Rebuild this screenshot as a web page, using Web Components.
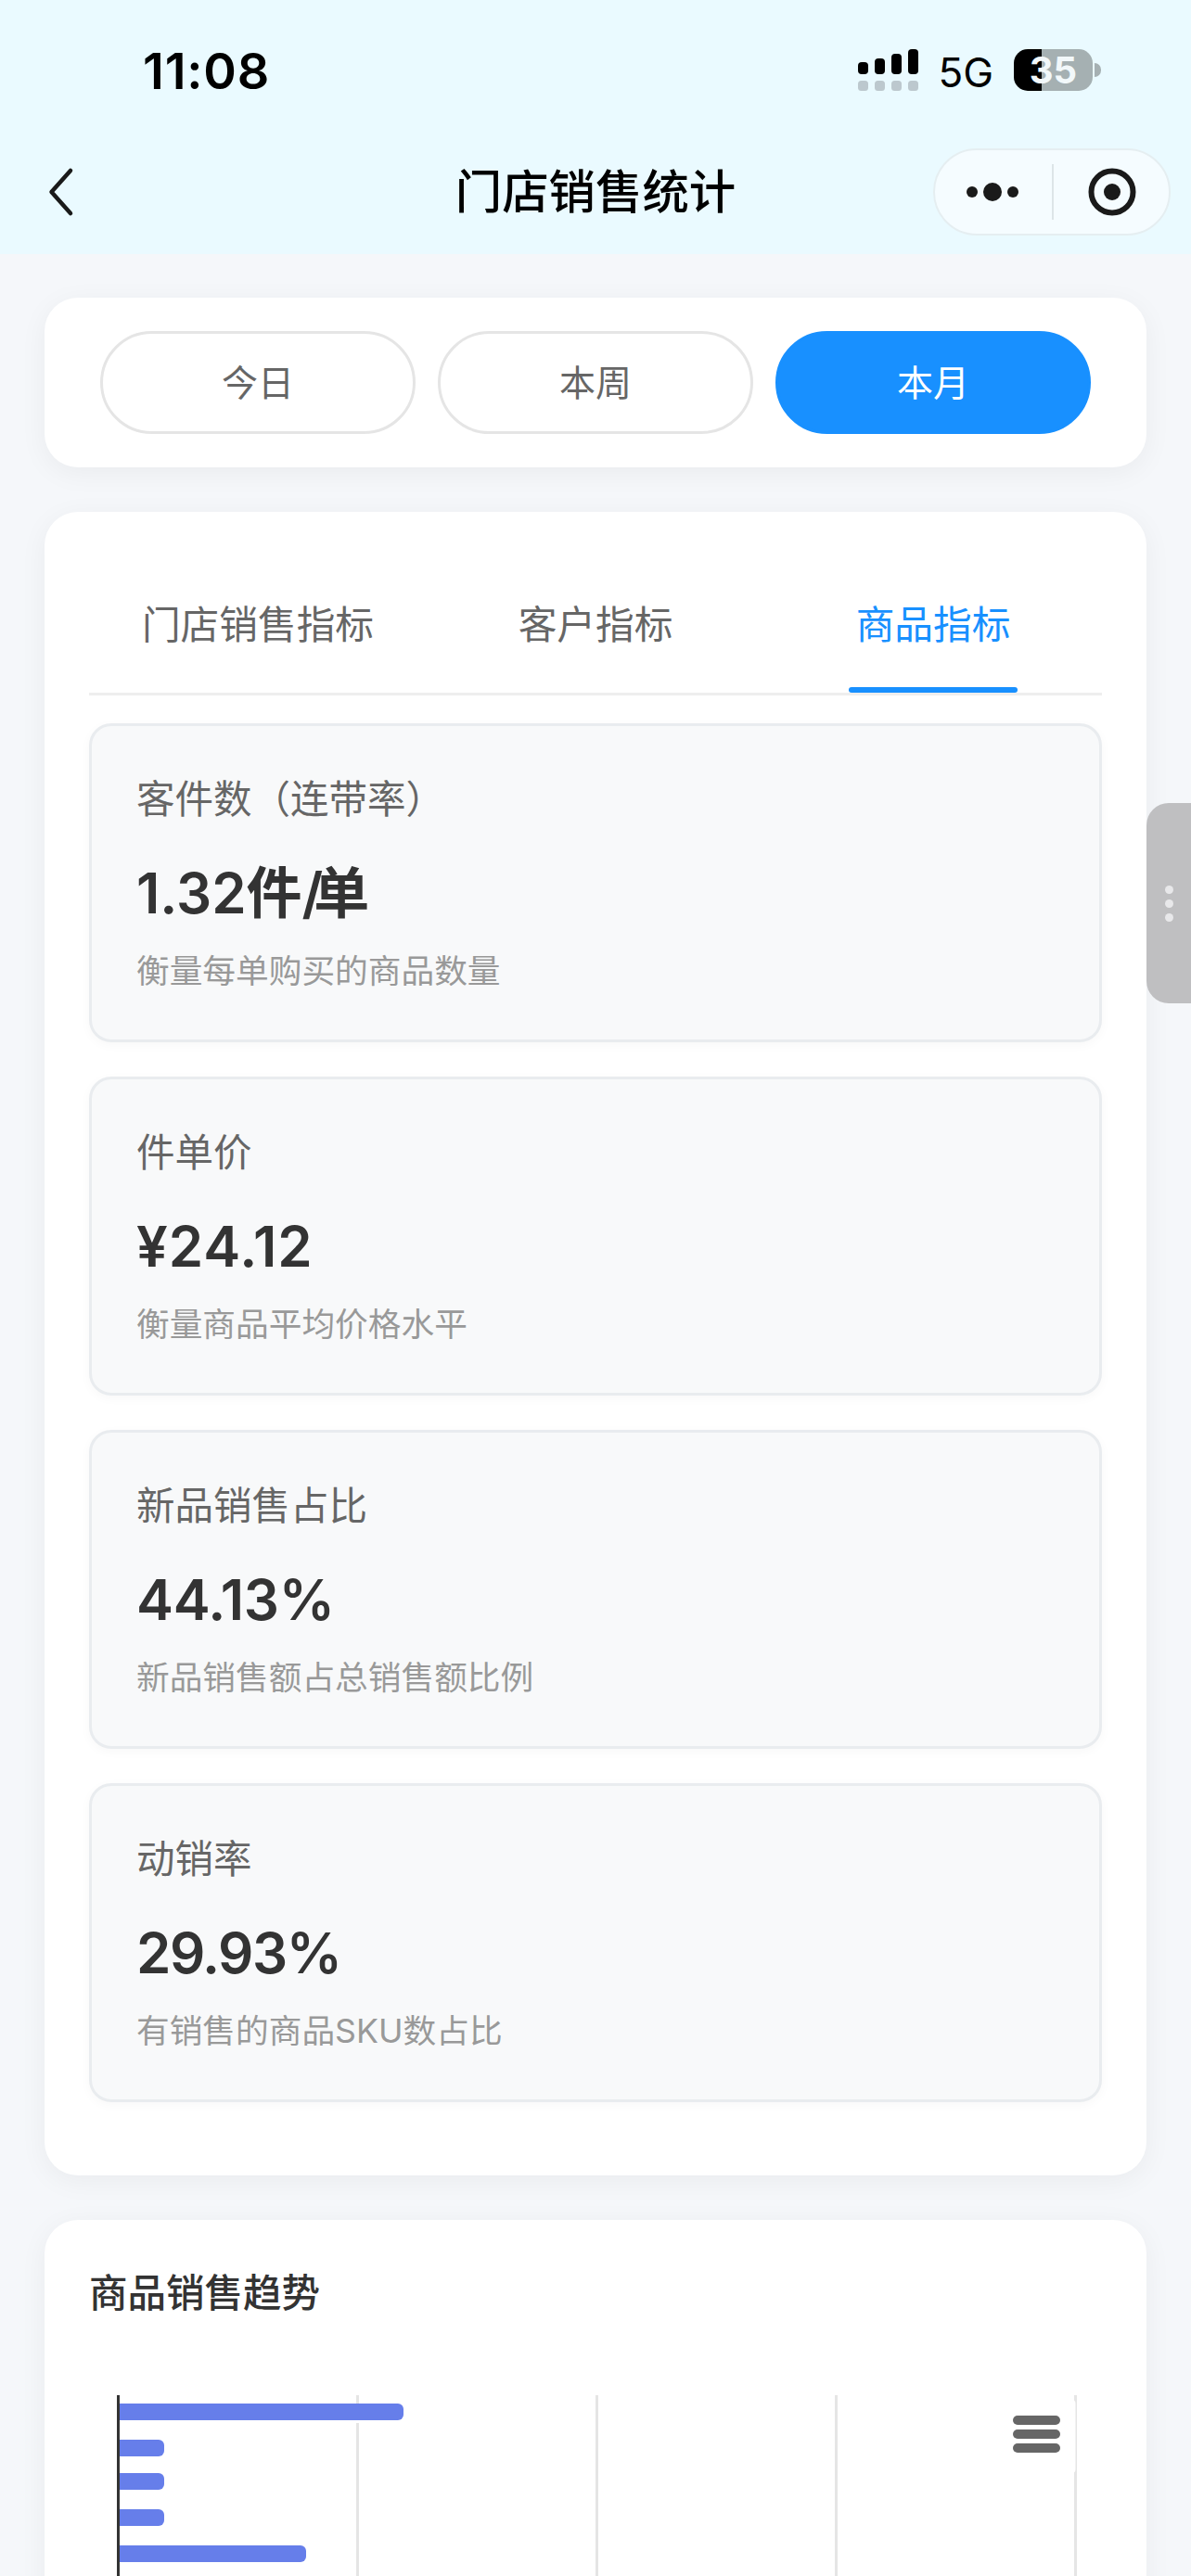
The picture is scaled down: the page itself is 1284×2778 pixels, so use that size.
<!DOCTYPE html>
<html lang="zh-CN">
<head>
<meta charset="utf-8">
<title>门店销售统计</title>
<style>
    html, body {
        margin: 0;
        height: 2778px;
        overflow: hidden;
        background: #f5f7fa;
        font-family: Inter, "Noto Sans CJK SC", sans-serif;
    }
    .page {
        position: relative;
        height: 2778px;
        overflow: hidden;
    }
    .content {
        display: flex;
        flex-direction: column;
        gap: 48px;
        padding: 47px 48px 0;
    }
    .periods {
        display: grid;
        grid-template-columns: repeat(3, 1fr);
        gap: 24px;
    }
    .metrics {
        display: flex;
        flex-direction: column;
        gap: 37px;
        margin-top: 30px;
        padding-bottom: 31px;
    }
</style>
</head>
<body>
<div class="page">
    <status-bar time="11:08" network="5G" battery="35"></status-bar>
    <nav-bar>门店销售统计</nav-bar>
    <div class="content">
        <panel-card compact>
            <div class="periods">
                <period-button>今日</period-button>
                <period-button>本周</period-button>
                <period-button active>本月</period-button>
            </div>
        </panel-card>
        <panel-card>
            <metric-tabs>
                <metric-tab>门店销售指标</metric-tab>
                <metric-tab>客户指标</metric-tab>
                <metric-tab active>商品指标</metric-tab>
            </metric-tabs>
            <div class="metrics">
                <metric-card>
                    <span slot="label">客件数（连带率）</span>
                    <span slot="value">1.32件<span style="letter-spacing: -10px">/</span>单</span>
                    <span slot="desc">衡量每单购买的商品数量</span>
                </metric-card>
                <metric-card>
                    <span slot="label">件单价</span>
                    <span slot="value" style="letter-spacing: 1px">¥24.12</span>
                    <span slot="desc">衡量商品平均价格水平</span>
                </metric-card>
                <metric-card>
                    <span slot="label">新品销售占比</span>
                    <span slot="value" style="letter-spacing: -0.3px">44.13%</span>
                    <span slot="desc">新品销售额占总销售额比例</span>
                </metric-card>
                <metric-card>
                    <span slot="label">动销率</span>
                    <span slot="value" style="letter-spacing: -1.5px">29.93%</span>
                    <span slot="desc">有销售的商品SKU数占比</span>
                </metric-card>
            </div>
        </panel-card>
        <panel-card>
            <trend-chart>商品销售趋势</trend-chart>
        </panel-card>
    </div>
    <side-handle></side-handle>
</div>

<script>
class StatusBar extends HTMLElement {
    constructor() {
        super();
        this.attachShadow({ mode: 'open' }).innerHTML = `
            <style>
                :host {
                    display: flex;
                    justify-content: space-between;
                    box-sizing: border-box;
                    height: 140px;
                    padding: 53px 106px 0 154px;
                    background: #eafaff;
                    color: #000;
                }
                .time {
                    font-size: 54px;
                    font-weight: 600;
                    line-height: 48px;
                    letter-spacing: 0.8px;
                }
                .right {
                    display: flex;
                    align-items: flex-start;
                }
                .net {
                    margin: 0 22px 0 21px;
                    font-size: 44px;
                    line-height: 50px;
                }
                .battery {
                    position: relative;
                    width: 85px;
                    height: 45px;
                    border-radius: 15px;
                    background: linear-gradient(90deg, #000 30px, #a5b0b2 30px);
                    color: #f2f8fa;
                    font-size: 40px;
                    font-weight: 700;
                    line-height: 45px;
                    text-align: center;
                }
                .battery::after {
                    content: '';
                    position: absolute;
                    left: 87px;
                    top: 15px;
                    width: 7px;
                    height: 15px;
                    border-radius: 0 8px 8px 0;
                    background: #a5b0b2;
                }
                svg { display: block; }
            </style>
            <div class="time">${this.getAttribute('time')}</div>
            <div class="right">
                <svg width="66" height="45" viewBox="0 0 66 45">
                    <rect x="1" y="14" width="11" height="13" rx="4" fill="#000"/>
                    <rect x="19" y="10" width="11" height="17" rx="4" fill="#000"/>
                    <rect x="37" y="5" width="11" height="22" rx="4" fill="#000"/>
                    <rect x="55" y="0" width="11" height="27" rx="4" fill="#000"/>
                    <g fill="#bcc8ce">
                        <rect x="1" y="34" width="11" height="11" rx="3.5"/>
                        <rect x="19" y="34" width="11" height="11" rx="3.5"/>
                        <rect x="37" y="34" width="11" height="11" rx="3.5"/>
                        <rect x="55" y="34" width="11" height="11" rx="3.5"/>
                    </g>
                </svg>
                <div class="net">${this.getAttribute('network')}</div>
                <div class="battery">${this.getAttribute('battery')}</div>
            </div>
        `;
    }
}

class NavBar extends HTMLElement {
    constructor() {
        super();
        this.attachShadow({ mode: 'open' }).innerHTML = `
            <style>
                :host {
                    display: grid;
                    grid-template-columns: 1fr auto 1fr;
                    align-items: center;
                    box-sizing: border-box;
                    height: 134px;
                    padding: 0 22px;
                    background: #eafaff;
                    color: #000;
                }
                .back {
                    margin-left: 28px;
                }
                .title {
                    font-size: 50.4px;
                    font-weight: 500;
                    line-height: 68px;
                }
                .capsule {
                    justify-self: end;
                    width: 256px;
                    height: 94px;
                }
                svg { display: block; }
            </style>
            <svg class="back" width="32" height="54" viewBox="0 0 32 54">
                <path d="M26 4 L5.5 27 L26 50" fill="none" stroke="#1a1a1a" stroke-width="4.5" stroke-linecap="round" stroke-linejoin="round"/>
            </svg>
            <div class="title"><slot></slot></div>
            <svg class="capsule" viewBox="0 0 256 94">
                <rect x="1" y="1" width="254" height="92" rx="46" fill="#f5fcff" stroke="#e5eef1" stroke-width="2"/>
                <circle cx="42" cy="47" r="6" fill="#1a1a1a"/>
                <circle cx="64" cy="47" r="10" fill="#1a1a1a"/>
                <circle cx="86" cy="47" r="6" fill="#1a1a1a"/>
                <rect x="128" y="17" width="2" height="60" fill="#dde5e8"/>
                <circle cx="193" cy="47" r="22.5" fill="none" stroke="#1a1a1a" stroke-width="6"/>
                <circle cx="193" cy="47" r="9" fill="#1a1a1a"/>
            </svg>
        `;
    }
}

class PanelCard extends HTMLElement {
    constructor() {
        super();
        const shadow = this.attachShadow({ mode: 'open' });
        shadow.appendChild(PanelCard.template.content.cloneNode(true));
    }

    static get template() {
        const template = document.createElement('template');
        template.innerHTML = `
            <style>
                :host {
                    display: block;
                    padding: 48px;
                    border-radius: 36px;
                    background: #fff;
                    box-shadow: 0 6px 30px rgba(0, 0, 0, 0.05);
                }
                :host([compact]) {
                    padding: 36px 60px;
                }
            </style>
            <slot></slot>
        `;
        return template;
    }
}

class PeriodButton extends HTMLElement {
    constructor() {
        super();
        this.attachShadow({ mode: 'open' }).innerHTML = `
            <style>
                :host {
                    display: flex;
                    align-items: center;
                    justify-content: center;
                    box-sizing: border-box;
                    height: 111px;
                    padding-bottom: 6px;
                    border: 3px solid #e5e5e5;
                    border-radius: 56px;
                    color: #666;
                    font-size: 39px;
                }
                :host([active]) {
                    border-color: #1890ff;
                    background: #1890ff;
                    color: #fff;
                }
            </style>
            <slot></slot>
        `;
    }
}

class MetricTabs extends HTMLElement {
    constructor() {
        super();
        this.attachShadow({ mode: 'open' }).innerHTML = `
            <style>
                :host {
                    display: grid;
                    grid-template-columns: repeat(3, 1fr);
                    height: 150px;
                    box-sizing: border-box;
                    border-bottom: 3px solid #eee;
                }
            </style>
            <slot></slot>
        `;
    }
}

class MetricTab extends HTMLElement {
    constructor() {
        super();
        this.attachShadow({ mode: 'open' }).innerHTML = `
            <style>
                :host {
                    position: relative;
                    display: flex;
                    align-items: center;
                    justify-content: center;
                    padding-bottom: 6px;
                    box-sizing: border-box;
                    color: #666;
                    font-size: 41.7px;
                }
                :host([active]) {
                    color: #1890ff;
                }
                :host([active])::after {
                    content: '';
                    position: absolute;
                    left: 25%;
                    bottom: 0;
                    width: 50%;
                    height: 6px;
                    border-radius: 3px;
                    background: #1890ff;
                }
            </style>
            <slot></slot>
        `;
    }
}

class MetricCard extends HTMLElement {
    constructor() {
        super();
        this.attachShadow({ mode: 'open' }).innerHTML = `
            <style>
                :host {
                    display: block;
                    box-sizing: border-box;
                    height: 344px;
                    padding: 48px;
                    border: 3px solid #e9ecef;
                    border-radius: 24px;
                    background: #f8f9fa;
                    box-shadow: 0 3px 12px rgba(0, 0, 0, 0.03);
                }
                .label {
                    color: #666;
                    font-size: 41.5px;
                    line-height: 63px;
                }
                .value {
                    margin-top: 24px;
                    color: #333;
                    font-size: 60px;
                    font-weight: 600;
                    line-height: 90px;
                }
                .desc {
                    margin-top: 12px;
                    color: #999;
                    font-size: 35.7px;
                    line-height: 54px;
                }
            </style>
            <div class="label"><slot name="label"></slot></div>
            <div class="value"><slot name="value"></slot></div>
            <div class="desc"><slot name="desc"></slot></div>
        `;
    }
}

class TrendChart extends HTMLElement {
    constructor() {
        super();
        // bars: y, right end (page px, minus the card's 96px left edge)
        const bars = [[9, 339], [48, 81], [84, 81], [123, 81], [162, 234]];
        const rows = bars.map(([y, end]) =>
            `<path d="M33 ${y} H${end - 6} a6 6 0 0 1 6 6 v6 a6 6 0 0 1 -6 6 H33 Z" fill="#667eea"/>`
        ).join('');
        this.attachShadow({ mode: 'open' }).innerHTML = `
            <style>
                :host {
                    display: block;
                }
                .title {
                    color: #333;
                    font-size: 41.5px;
                    font-weight: 500;
                    line-height: 63px;
                }
                svg {
                    display: block;
                    margin-top: 78px;
                }
            </style>
            <div class="title"><slot></slot></div>
            <svg width="1092" height="240" viewBox="0 0 1092 240">
                <g fill="#e5e5e5">
                    <rect x="288" width="3" height="240"/>
                    <rect x="546" width="3" height="240"/>
                    <rect x="804" width="3" height="240"/>
                    <rect x="1062" width="3" height="240"/>
                </g>
                <rect x="283" y="9" width="60" height="21" fill="#fff"/>
                <rect x="980" y="5" width="83.5" height="79" rx="4" fill="#fff"/>
                <rect x="30" width="3" height="240" fill="#333"/>
                ${rows}
                <g fill="#666">
                    <rect x="996" y="22" width="51" height="10" rx="5"/>
                    <rect x="996" y="37" width="51" height="10" rx="5"/>
                    <rect x="996" y="52" width="51" height="10" rx="5"/>
                </g>
            </svg>
        `;
    }
}

class SideHandle extends HTMLElement {
    constructor() {
        super();
        this.attachShadow({ mode: 'open' }).innerHTML = `
            <style>
                :host {
                    position: absolute;
                    right: 0;
                    top: 866px;
                    display: flex;
                    flex-direction: column;
                    align-items: center;
                    justify-content: center;
                    gap: 6px;
                    box-sizing: border-box;
                    width: 48px;
                    height: 216px;
                    border-radius: 24px 0 0 24px;
                    background: #bfbfc1;
                }
                i {
                    width: 9px;
                    height: 9px;
                    border-radius: 50%;
                    background: #e8e8ea;
                }
            </style>
            <i></i><i></i><i></i>
        `;
    }
}

customElements.define('status-bar', StatusBar);
customElements.define('nav-bar', NavBar);
customElements.define('panel-card', PanelCard);
customElements.define('period-button', PeriodButton);
customElements.define('metric-tabs', MetricTabs);
customElements.define('metric-tab', MetricTab);
customElements.define('metric-card', MetricCard);
customElements.define('trend-chart', TrendChart);
customElements.define('side-handle', SideHandle);
</script>
</body>
</html>
